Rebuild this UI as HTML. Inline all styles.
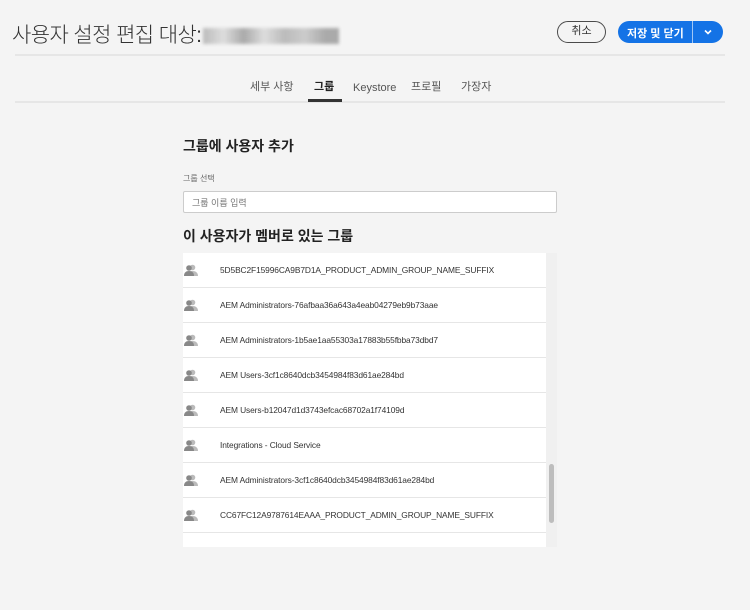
<!DOCTYPE html>
<html><head><meta charset="utf-8"><style>
*{margin:0;padding:0;box-sizing:border-box}
body{width:750px;height:610px;background:#f4f4f4;font-family:"Liberation Sans","Noto Sans CJK KR",sans-serif;position:relative;overflow:hidden;color:#2c2c2c}
.abs{position:absolute}
.title{left:12px;top:19px;font-size:21px;letter-spacing:-0.6px;color:#333;white-space:nowrap;font-weight:300}
.blur{display:inline-block;width:136px;height:16px;background:linear-gradient(90deg,#bbb,#ddd 15%,#aaa 30%,#ddd 45%,#bbb 60%,#ccc 75%,#aaa 90%);filter:blur(1.5px);vertical-align:middle;margin-left:2px}
.cancel{left:557px;top:21px;width:49px;height:22px;border:1.5px solid #4b4b4b;border-radius:12px;font-size:11px;text-align:center;line-height:19px;color:#333}
.save{left:618px;top:21px;width:105px;height:22px;background:#1473e6;border-radius:12px;color:#fff;font-size:11px;font-weight:bold}
.hr{height:2px;background:#e6e6e6}
.tab{top:80px;font-size:11px;color:#555;line-height:14px}
.list{left:183px;top:253px;width:363px;height:294px;background:#fff;overflow:hidden}
.row{height:35px;border-bottom:1px solid #e6e6e6;position:relative;font-size:8.4px;color:#333;line-height:34px;padding-left:37px;letter-spacing:-0.1px}
.row svg{position:absolute;left:1px;top:11px}
</style></head><body>
<div class="abs title">사용자 설정 편집 대상:<span class="blur"></span></div>
<div class="abs cancel">취소</div>
<div class="abs save"><span style="position:absolute;left:9px;top:4px">저장 및 닫기</span><span style="position:absolute;left:74px;top:0;width:1px;height:22px;background:#fff;opacity:.6"></span><svg style="position:absolute;left:86px;top:8px" width="8" height="6" viewBox="0 0 8 6"><path d="M1 1.5L4 4.5L7 1.5" stroke="#fff" stroke-width="1.6" fill="none"/></svg></div>
<div class="abs hr" style="left:15px;top:54px;width:710px"></div>
<div class="abs tab" style="left:250px">세부 사항</div>
<div class="abs tab" style="left:314px;color:#222;font-weight:bold">그룹</div>
<div class="abs tab" style="left:353px;top:81px">Keystore</div>
<div class="abs tab" style="left:411px">프로필</div>
<div class="abs tab" style="left:461px">가장자</div>
<div class="abs hr" style="left:15px;top:101px;width:710px"></div>
<div class="abs" style="left:308px;top:99px;width:34px;height:3px;background:#333"></div>
<div class="abs" style="left:183px;top:136px;font-size:14px;font-weight:bold;color:#222">그룹에 사용자 추가</div>
<div class="abs" style="left:183px;top:173px;font-size:8px;color:#666">그룹 선택</div>
<div class="abs" style="left:183px;top:191px;width:374px;height:22px;background:#fff;border:1px solid #ccc;border-radius:2px;font-size:9px;color:#777;padding:4px 8px">그룹 이름 입력</div>
<div class="abs" style="left:183px;top:226px;font-size:14px;font-weight:bold;color:#222">이 사용자가 멤버로 있는 그룹</div>
<div class="abs list">
<div class="row">5D5BC2F15996CA9B7D1A_PRODUCT_ADMIN_GROUP_NAME_SUFFIX</div>
<div class="row">AEM Administrators-76afbaa36a643a4eab04279eb9b73aae</div>
<div class="row">AEM Administrators-1b5ae1aa55303a17883b55fbba73dbd7</div>
<div class="row">AEM Users-3cf1c8640dcb3454984f83d61ae284bd</div>
<div class="row">AEM Users-b12047d1d3743efcac68702a1f74109d</div>
<div class="row">Integrations - Cloud Service</div>
<div class="row">AEM Administrators-3cf1c8640dcb3454984f83d61ae284bd</div>
<div class="row">CC67FC12A9787614EAAA_PRODUCT_ADMIN_GROUP_NAME_SUFFIX</div>
<div class="row"></div>
</div>
<div class="abs" style="left:546px;top:253px;width:11px;height:294px;background:#f0f0f0"></div>
<div class="abs" style="left:549px;top:464px;width:5px;height:59px;background:#bdbdbd;border-radius:3px"></div>
<script>
document.querySelectorAll('.row').forEach(r=>{if(r.textContent)r.insertAdjacentHTML('afterbegin','<svg width="14" height="12" viewBox="0 0 14 12"><circle cx="8.5" cy="3.5" r="2.8" fill="#bbb"/><path d="M3 12c0-3.5 2.5-5 5.5-5S14 8.5 14 12z" fill="#bbb"/><circle cx="5" cy="4" r="2.8" fill="#888"/><path d="M0 12c0-3.5 2-5 5-5s5 1.5 5 5z" fill="#888"/></svg>')});
</script>
</body></html>
